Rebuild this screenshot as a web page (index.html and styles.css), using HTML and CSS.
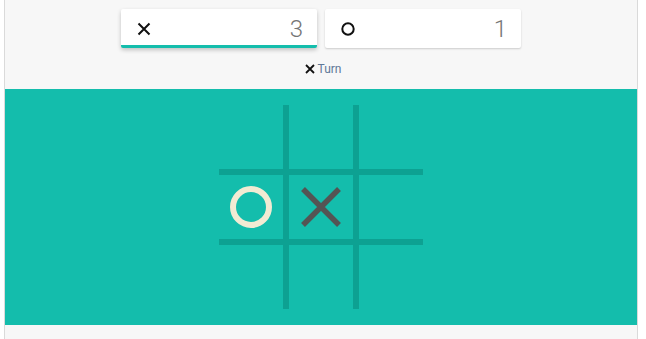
FILE: index.html
```html
<!DOCTYPE html>
<html lang="en">
<head>
    <meta charset="UTF-8">
    <meta name="viewport" content="width=device-width, initial-scale=1.0">
    <title>Tic Tac Toe</title>
    <link rel="stylesheet" href="styles.css">
</head>
<body>

<div class="game">
    <div class="game-header">
        <div class="scores">
            <div class="score-card active">
                <svg class="mark-icon" width="14" height="14" viewBox="0 0 14 14">
                    <path d="M1.5 1.5 L12.5 12.5 M12.5 1.5 L1.5 12.5" stroke="#111" stroke-width="2" fill="none"/>
                </svg>
                <span class="score">3</span>
            </div>
            <div class="score-card">
                <svg class="mark-icon" width="14" height="14" viewBox="0 0 14 14">
                    <circle cx="7" cy="7" r="5.7" stroke="#111" stroke-width="2" fill="none"/>
                </svg>
                <span class="score">1</span>
            </div>
        </div>
        <div class="turn">
            <svg width="10" height="10" viewBox="0 0 10 10">
                <path d="M1 1 L9 9 M9 1 L1 9" stroke="#111" stroke-width="1.8" fill="none"/>
            </svg>
            <span>Turn</span>
        </div>
    </div>

    <div class="board-area">
        <div class="board">
            <div class="cell"></div>
            <div class="cell"></div>
            <div class="cell"></div>
            <div class="cell">
                <svg width="42" height="42" viewBox="0 0 42 42">
                    <circle cx="21" cy="21" r="18" stroke="#f2ebd3" stroke-width="6" fill="none"/>
                </svg>
            </div>
            <div class="cell">
                <svg width="40" height="40" viewBox="0 0 40 40">
                    <path d="M2 2 L38 38 M38 2 L2 38" stroke="#545454" stroke-width="5.5" fill="none"/>
                </svg>
            </div>
            <div class="cell"></div>
            <div class="cell"></div>
            <div class="cell"></div>
            <div class="cell"></div>
        </div>
    </div>
</div>

</body>
</html>
```

FILE: styles.css
```css
body {
    margin: 0;
    padding: 0;
    background-color: #fff;
    font-family: Roboto, "Liberation Sans", Arial, sans-serif;
}
.game {
    margin-left: 4px;
    width: 634px;
    height: 339px;
    box-sizing: border-box;
    border-left: 1px solid #dadada;
    border-right: 1px solid #dadada;
    background-color: #f7f7f7;
}
.game-header {
    height: 89px;
    box-sizing: border-box;
    padding-top: 9px;
}
.scores {
    display: flex;
    justify-content: center;
    gap: 8px;
}
.score-card {
    width: 196px;
    height: 39px;
    box-sizing: border-box;
    background-color: #fff;
    border-radius: 2px;
    display: flex;
    align-items: center;
    justify-content: space-between;
    padding: 0 14px 0 16px;
    box-shadow: 0 1px 2px rgba(0, 0, 0, 0.18);
}
.score-card.active {
    border-bottom: 3px solid #14bdac;
    padding-top: 3px;
    box-shadow: 0 2px 4px rgba(0, 0, 0, 0.22);
}
.score {
    font-size: 24px;
    font-weight: 300;
    color: #757575;
}
.turn {
    margin-top: 12px;
    height: 18px;
    display: flex;
    align-items: center;
    justify-content: center;
    gap: 3px;
    font-size: 12px;
    color: #5f7897;
    padding-left: 4px;
}
.board-area {
    height: 236px;
    box-sizing: border-box;
    padding-top: 16px;
    background-color: #14bdac;
}
.board {
    width: 204px;
    margin: 0 auto;
    display: grid;
    grid-template-columns: repeat(3, 64px);
    grid-template-rows: repeat(3, 64px);
    gap: 6px;
    background-color: #0da192;
}
.cell {
    background-color: #14bdac;
    display: flex;
    align-items: center;
    justify-content: center;
}
.cell svg {
    display: block;
}
```
